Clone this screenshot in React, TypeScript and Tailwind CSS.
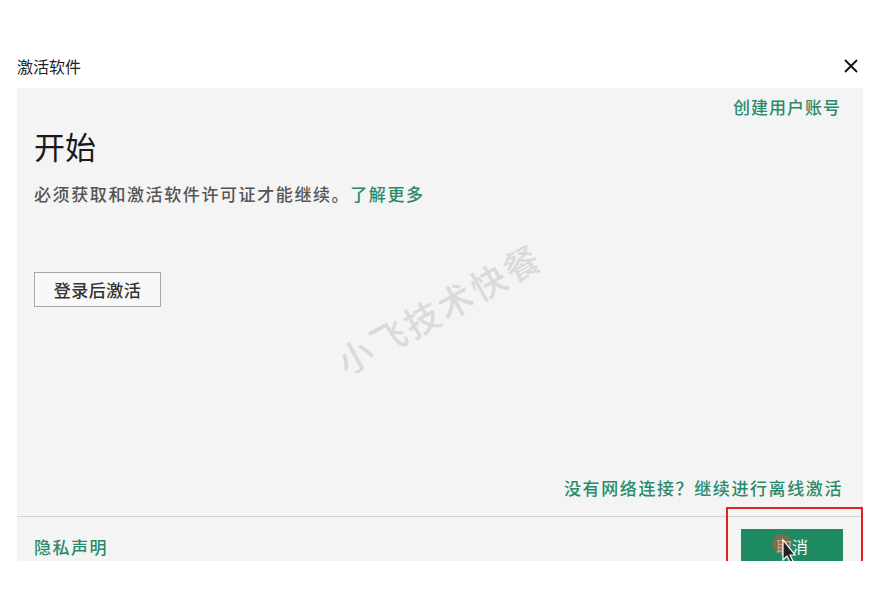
export default function App() {
  const font = { fontFamily: '"Noto Sans CJK SC", "Noto Sans", sans-serif' };
  return (
    <div className="relative w-[881px] h-[612px] bg-white overflow-hidden text-[#222]" style={font}>
      {/* title bar */}
      <div className="flex items-center justify-between pl-[17px] pr-[22px] pt-[55px] h-[88px] pb-[12px]">
        <span className="text-[16px] leading-[20px] text-[#222]">激活软件</span>
        <svg width="16" height="16" viewBox="0 0 16 16" className="text-[#111]">
          <path d="M2 2 L14 14 M14 2 L2 14" stroke="currentColor" strokeWidth="1.8" />
        </svg>
      </div>

      {/* panel */}
      <div className="relative ml-[17px] w-[846px] h-[473px] bg-[#f4f4f4] overflow-hidden flex flex-col">
        <div className="h-[428px] shrink-0 flex flex-col px-[17px]">
          <div className="flex justify-end pt-[7px] pr-[5px]">
            <span className="text-[17px] leading-[24px] tracking-[1px] font-medium text-[#2b8a6a]">创建用户账号</span>
          </div>
          <h1 className="mt-[9px] text-[31px] leading-[36px] text-[#1a1a1a]">开始</h1>
          <p className="mt-[18px] text-[17px] leading-[24px] tracking-[1.6px] font-medium text-[#555]">
            必须获取和激活软件许可证才能继续。<span className="text-[#2b8a6a]">了解更多</span>
          </p>
          <div className="mt-[66px]">
            <button className="w-[127px] h-[35px] border border-[#a8a8a8] bg-[#f8f8f8] text-[17px] tracking-[0.5px] font-medium text-[#333]">
              登录后激活
            </button>
          </div>
          <div className="mt-auto mb-[16px] flex justify-end pr-[3px]">
            <span className="text-[17px] leading-[24px] tracking-[1.6px] font-medium text-[#2b8a6a]">
              没有网络连接？继续进行离线激活
            </span>
          </div>
        </div>
        <div className="h-px shrink-0 bg-[#d2d2d2]" />
        <div className="flex shrink-0 items-start justify-between pl-[17px] pr-[20px] pt-[12px]">
          <span className="mt-[6px] text-[17px] leading-[24px] tracking-[1.5px] font-medium text-[#2b8a6a]">隐私声明</span>
          <button className="relative w-[102px] h-[36px] bg-[#1e8a62] text-white text-[16px] flex justify-center pt-[5px]">
            取消
            <svg width="26" height="30" viewBox="0 0 26 30" className="absolute left-[30px] top-[3px]">
              <circle cx="11" cy="12" r="10" fill="#b0603f" opacity="0.6" />
              <path d="M12 8 L12 28 L16 24 L19 30 L22 29 L19 23 L24 23 Z" fill="#222" stroke="#fff" strokeWidth="1.2" />
            </svg>
          </button>
        </div>

        {/* highlight box */}
        <div className="absolute left-[709px] top-[419px] w-[137px] h-[60px] border-2 border-[#e02222]" />

        {/* watermark */}
        <div className="absolute left-[308px] top-[194px] rotate-[-29deg] text-[35px] tracking-[3px] font-medium text-[#dadada] whitespace-nowrap pointer-events-none">
          小飞技术快餐
        </div>
      </div>
    </div>
  );
}
